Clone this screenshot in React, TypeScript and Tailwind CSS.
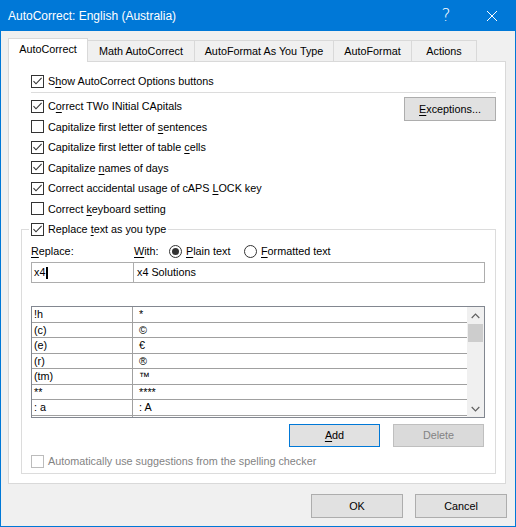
import React from 'react';

function Check({ checked, disabled }: { checked?: boolean; disabled?: boolean }) {
    return (
        <span
            className={
                'flex w-[13px] h-[13px] shrink-0 items-center justify-center border bg-white ' +
                (disabled ? 'border-[#bcbcbc]' : 'border-[#333333]')
            }
        >
            {checked && (
                <svg width="11" height="11" viewBox="0 0 11 11">
                    <path d="M1.5 5.2 L4 7.8 L9.6 1.9" fill="none" stroke="#333333" strokeWidth="1.1" />
                </svg>
            )}
        </span>
    );
}

function Radio({ checked }: { checked?: boolean }) {
    return (
        <span className="flex w-[13px] h-[13px] shrink-0 items-center justify-center rounded-full border border-[#333333] bg-white">
            {checked && <span className="block w-[7px] h-[7px] rounded-full bg-[#333333]" />}
        </span>
    );
}

function U({ children }: { children: React.ReactNode }) {
    return <span className="underline underline-offset-[2px]">{children}</span>;
}

function Row({ checked, children }: { checked?: boolean; children: React.ReactNode }) {
    return (
        <div className="flex items-center h-[20.5px]">
            <Check checked={checked} />
            <span className="ml-[4px]">{children}</span>
        </div>
    );
}

const entries: [string, string][] = [
    ['!h', '*'],
    ['(c)', '©'],
    ['(e)', '€'],
    ['(r)', '®'],
    ['(tm)', '™'],
    ['**', '****'],
    [': a', ': A'],
];

const tabs = ['Math AutoCorrect', 'AutoFormat As You Type', 'AutoFormat', 'Actions'];
const tabWidths = ['w-[107px]', 'w-[139px]', 'w-[78px]', 'w-[65px]'];

export default function App() {
    return (
        <div className="w-[516px] h-[527px] flex flex-col bg-[#f0f0f0] border-x border-b border-[#0078d7] font-['Liberation_Sans',Arial,sans-serif] text-[10.8px] text-black select-none">
            {/* Title bar */}
            <div className="h-[31px] shrink-0 flex items-center bg-[#0078d7] text-white pl-[7px]">
                <span className="text-[12px] flex-1">AutoCorrect: English (Australia)</span>
                <span className="text-[17px] leading-none font-['DejaVu_Sans',sans-serif] font-extralight w-[20px] text-center mr-[31px]">?</span>
                <svg width="10" height="10" viewBox="0 0 10 10" className="mr-[18px]">
                    <path d="M0 0 L10 10 M10 0 L0 10" stroke="white" strokeWidth="1" />
                </svg>
            </div>

            <div className="pl-[7px] pr-[9px]">
                {/* Tabs */}
                <div className="flex items-end h-[24px] mt-[7px] -mb-[1px] relative z-10">
                    <div className="w-[80px] h-[24px] flex items-center justify-center border border-b-0 border-[#d9d9d9] bg-white pb-[2px]">
                        AutoCorrect
                    </div>
                    {tabs.map((t, i) => (
                        <div
                            key={t}
                            className={
                                tabWidths[i] +
                                ' h-[22px] flex items-center justify-center border border-l-0 border-[#d9d9d9] bg-[#f0f0f0]'
                            }
                        >
                            {t}
                        </div>
                    ))}
                </div>

                {/* Panel */}
                <div className="border border-[#d9d9d9] bg-white pl-[12px] pr-[9px] pt-[9px] pb-[9px]">
                    <div className="pl-[10px]">
                        <div className="flex items-center h-[20px]">
                            <Check checked />
                            <span className="ml-[4px]">
                                S<U>h</U>ow AutoCorrect Options buttons
                            </span>
                        </div>
                    </div>
                    <div className="mt-[1px] ml-[10px] h-[1px] bg-[#dcdcdc]" />

                    <div className="flex mt-[3px] pl-[10px]">
                        <div className="flex-1">
                            <Row checked>
                                C<U>o</U>rrect TWo INitial CApitals
                            </Row>
                            <Row>
                                Capitalize first letter of <U>s</U>entences
                            </Row>
                            <Row checked>
                                Capitalize first letter of table <U>c</U>ells
                            </Row>
                            <Row checked>
                                Capitalize <U>n</U>ames of days
                            </Row>
                            <Row checked>
                                Correct accidental usage of cAPS <U>L</U>OCK key
                            </Row>
                            <Row>
                                Correct <U>k</U>eyboard setting
                            </Row>
                        </div>
                        <button className="w-[92px] h-[24px] mt-[1px] border border-[#adadad] bg-[#e1e1e1]">
                            <U>E</U>xceptions...
                        </button>
                    </div>

                    {/* Replace group */}
                    <fieldset className="border border-[#dcdcdc] pl-[9px] pr-[10px] pb-[2px]">
                        <legend className="-ml-[2px] px-[2px] h-[20px] flex items-center">
                            <Check checked />
                            <span className="ml-[4px]">
                                Replace <U>t</U>ext as you type
                            </span>
                        </legend>

                        <div className="flex items-center h-[20px] mt-[2px]">
                            <span className="w-[103px]">
                                <U>R</U>eplace:
                            </span>
                            <span className="w-[35px]">
                                <U>W</U>ith:
                            </span>
                            <Radio checked />
                            <span className="ml-[4px] w-[58px]">
                                <U>P</U>lain text
                            </span>
                            <Radio />
                            <span className="ml-[4px]">
                                <U>F</U>ormatted text
                            </span>
                        </div>

                        <div className="flex h-[21px] mt-[1px]">
                            <div className="w-[103px] h-full flex items-center border border-[#adadad] pl-[2px]">
                                x4
                                <span className="inline-block w-[2px] h-[12px] bg-black ml-[1px]" />
                            </div>
                            <div className="flex-1 h-full flex items-center border border-l-0 border-[#adadad] pl-[3px]">
                                x4 Solutions
                            </div>
                        </div>

                        {/* Entries list */}
                        <div className="flex h-[112px] mt-[23px] border border-[#828790] bg-white overflow-hidden">
                            <div className="flex-1">
                                {entries.map(([a, b]) => (
                                    <div key={a} className="flex h-[15.5px] border-b border-[#a0a0a0]">
                                        <div className="w-[101px] shrink-0 border-r border-[#a0a0a0] pl-[2px] flex items-center">
                                            {a}
                                        </div>
                                        <div className="pl-[6px] flex items-center">{b}</div>
                                    </div>
                                ))}
                                <div className="flex h-[2px]">
                                    <div className="w-[101px] shrink-0 border-r border-[#a0a0a0]" />
                                </div>
                            </div>
                            <div className="w-[17px] shrink-0 bg-[#f0f0f0] flex flex-col">
                                <div className="h-[17px] flex items-center justify-center">
                                    <svg width="9" height="6" viewBox="0 0 9 6">
                                        <path d="M0.7 5 L4.5 1.2 L8.3 5" fill="none" stroke="#606060" strokeWidth="1.2" />
                                    </svg>
                                </div>
                                <div className="h-[18px] mx-[1px] bg-[#cdcdcd]" />
                                <div className="flex-1" />
                                <div className="h-[17px] flex items-center justify-center">
                                    <svg width="9" height="6" viewBox="0 0 9 6">
                                        <path d="M0.7 1 L4.5 4.8 L8.3 1" fill="none" stroke="#606060" strokeWidth="1.2" />
                                    </svg>
                                </div>
                            </div>
                        </div>

                        <div className="flex justify-end gap-[13px] mt-[6px] mr-[1px]">
                            <button className="w-[91px] h-[23px] border border-[#0078d7] bg-[#e1e1e1]">
                                <U>A</U>dd
                            </button>
                            <button className="w-[91px] h-[23px] border border-[#bfbfbf] bg-[#dadada] text-[#838383]">
                                Delete
                            </button>
                        </div>

                        <div className="flex items-center h-[20px] mt-[4px] text-[#838383]">
                            <Check disabled />
                            <span className="ml-[4px]">Automatically use suggestions from the spelling checker</span>
                        </div>
                    </fieldset>
                </div>
            </div>

            {/* Dialog buttons */}
            <div className="flex justify-end gap-[12px] mt-[10px] pr-[8px]">
                <button className="w-[92px] h-[24px] border border-[#adadad] bg-[#e1e1e1]">OK</button>
                <button className="w-[92px] h-[24px] border border-[#adadad] bg-[#e1e1e1]">Cancel</button>
            </div>
        </div>
    );
}
